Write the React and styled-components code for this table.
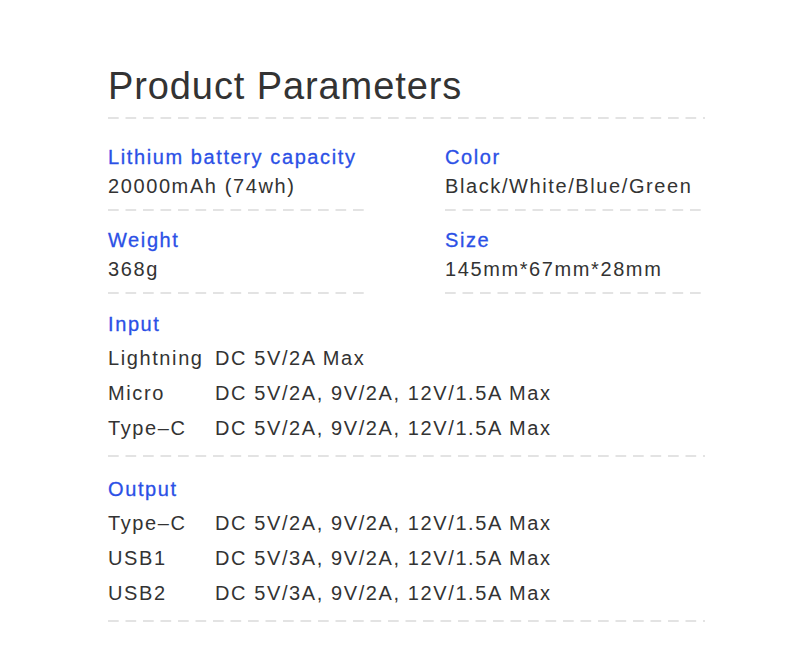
import React from 'react';
import styled, { createGlobalStyle } from 'styled-components';

const GlobalStyle = createGlobalStyle`
  body {
    margin: 0;
    background: #ffffff;
    font-family: 'Liberation Sans', Arial, sans-serif;
    color: #333333;
  }
`;

const Page = styled.div`
  width: 800px;
  height: 657px;
  padding: 64px 95px 0 108px;
  box-sizing: border-box;
`;

const Title = styled.h1`
  margin: 0;
  font-size: 38px;
  font-weight: 400;
  line-height: 44px;
  color: #333333;
  letter-spacing: 0.9px;
`;

const Dashed = styled.div`
  height: 2px;
  margin-top: ${(p) => p.top || 0}px;
  background-image: linear-gradient(to right, #e3e3e3 0 11px, transparent 11px 17.5px);
  background-size: 17.5px 2px;
  background-repeat: repeat-x;
`;

const Grid = styled.div`
  display: grid;
  grid-template-columns: 260px 260px;
  column-gap: 77px;
  margin-top: 24px;
  row-gap: 15px;
`;

const Cell = styled.div`
  display: flex;
  flex-direction: column;
`;

const Label = styled.div`
  font-size: 20px;
  line-height: 29px;
  color: #2b50e6;
  letter-spacing: 1.6px;
  -webkit-text-stroke: 0.3px #2b50e6;
`;

const Value = styled.div`
  font-size: 20px;
  line-height: 29px;
  color: #333333;
  letter-spacing: 1.6px;
`;

const Section = styled.div`
  margin-top: ${(p) => p.top}px;
`;

const Rows = styled.div`
  margin-top: 2px;
`;

const Spec = styled.div`
  display: grid;
  grid-template-columns: 107px auto;
  font-size: 20px;
  line-height: 35px;
  color: #333333;
  letter-spacing: 1.6px;
`;

const cells = [
  ['Lithium battery capacity', '20000mAh (74wh)'],
  ['Color', 'Black/White/Blue/Green'],
  ['Weight', '368g'],
  ['Size', '145mm*67mm*28mm'],
];

const input = [
  ['Lightning', 'DC 5V/2A Max'],
  ['Micro', 'DC 5V/2A, 9V/2A, 12V/1.5A Max'],
  ['Type–C', 'DC 5V/2A, 9V/2A, 12V/1.5A Max'],
];

const output = [
  ['Type–C', 'DC 5V/2A, 9V/2A, 12V/1.5A Max'],
  ['USB1', 'DC 5V/3A, 9V/2A, 12V/1.5A Max'],
  ['USB2', 'DC 5V/3A, 9V/2A, 12V/1.5A Max'],
];

const SpecBlock = ({ title, rows, top }) => (
  <Section top={top}>
    <Label>{title}</Label>
    <Rows>
      {rows.map(([k, v]) => (
        <Spec key={k}>
          <span>{k}</span>
          <span>{v}</span>
        </Spec>
      ))}
    </Rows>
    <Dashed top={9} />
  </Section>
);

export default function App() {
  return (
    <Page>
      <GlobalStyle />
      <Title>Product Parameters</Title>
      <Dashed top={9} />
      <Grid>
        {cells.map(([l, v]) => (
          <Cell key={l}>
            <Label>{l}</Label>
            <Value>{v}</Value>
            <Dashed top={8} />
          </Cell>
        ))}
      </Grid>
      <SpecBlock title="Input" rows={input} top={16} />
      <SpecBlock title="Output" rows={output} top={18} />
    </Page>
  );
}
